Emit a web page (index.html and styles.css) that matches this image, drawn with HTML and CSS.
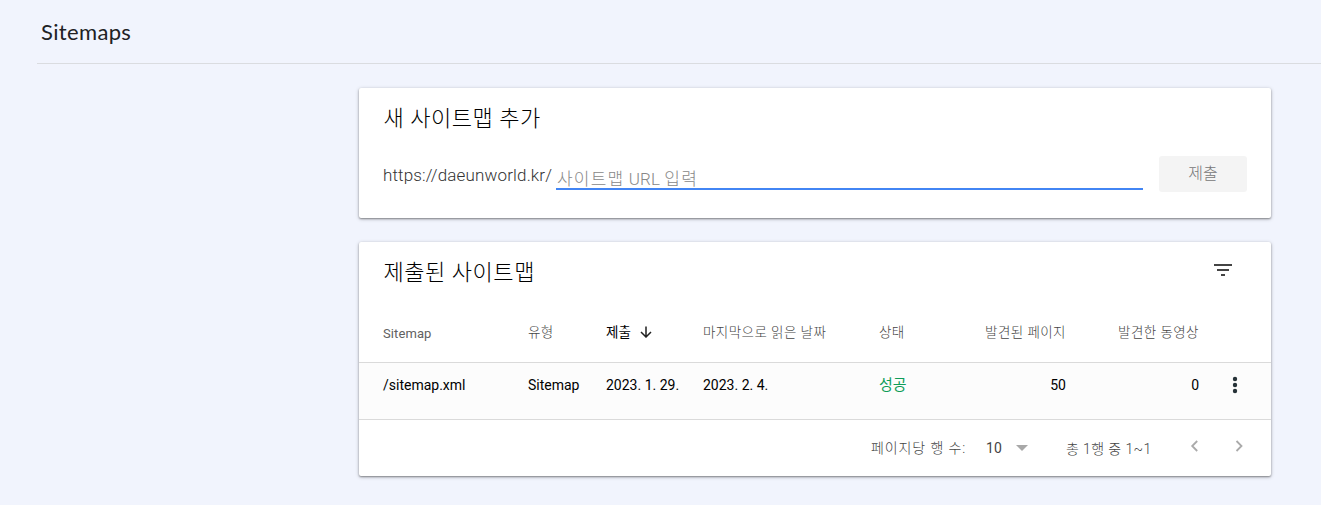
FILE: index.html
```html
<!DOCTYPE html>
<html lang="ko">
<head>
<meta charset="utf-8">
<title>Sitemaps</title>
<link rel="stylesheet" href="styles.css">
</head>
<body>
<header class="page-header"><h1 class="page-title">Sitemaps</h1></header>
<main class="content">
  <section class="card add-card">
    <h2 class="card-title">새 사이트맵 추가</h2>
    <div class="add-form">
      <span class="prefix">https://daeunworld.kr/</span>
      <div class="field"><span class="placeholder"><span class="ko">사이트맵</span> URL <span class="ko">입력</span></span></div>
      <button class="submit" disabled>제출</button>
    </div>
  </section>
  <section class="card">
    <div class="card-head">
      <h2 class="card-title">제출된 사이트맵</h2>
      <svg class="filter" width="24" height="24" viewBox="0 0 24 24"><path fill="#444" d="M3 6h18v2H3zM6 11h12v2H6zM10 16h4v2h-4z"/></svg>
    </div>
    <div class="row head-row">
      <span class="latin-head">Sitemap</span>
      <span>유형</span>
      <span class="sorted">제출<svg class="arrow" width="12" height="12" viewBox="0 0 12 12"><path d="M6 .5V11M1 6l5 5 5-5" fill="none" stroke="#212121" stroke-width="1.5"/></svg></span>
      <span>마지막으로 읽은 날짜</span>
      <span>상태</span>
      <span class="num">발견된 페이지</span>
      <span class="num">발견한 동영상</span>
    </div>
    <div class="row data-row">
      <span>/sitemap.xml</span>
      <span>Sitemap</span>
      <span>2023. 1. 29.</span>
      <span>2023. 2. 4.</span>
      <span class="ok">성공</span>
      <span class="num">50</span>
      <span class="num">0</span>
      <svg class="more" width="6" height="18" viewBox="0 0 6 18"><g fill="#263238"><circle cx="3" cy="3" r="2.2"/><circle cx="3" cy="9" r="2.2"/><circle cx="3" cy="15" r="2.2"/></g></svg>
    </div>
    <footer class="pager">
      <span class="per-page">페이지당 행 수:</span>
      <span class="size">10</span>
      <svg class="caret" width="12" height="6" viewBox="0 0 12 6"><path fill="#a8a8a8" d="M0 0h12L6 6z"/></svg>
      <span class="range">총 1행 중 1~1</span>
      <svg class="chev" width="8" height="12" viewBox="0 0 8 12"><path d="M7.2 1l-5 5 5 5" fill="none" stroke="#aaa" stroke-width="1.8"/></svg>
      <svg class="chev next" width="8" height="12" viewBox="0 0 8 12"><path d="M1.5 1l5 5-5 5" fill="none" stroke="#aaa" stroke-width="1.8"/></svg>
    </footer>
  </section>
</main>
</body>
</html>
```

FILE: styles.css
```css
* { box-sizing: border-box; }
body {
  margin: 0;
  height: 505px;
  overflow: hidden;
  background: #f1f4fd;
  color: #212121;
  font-family: Roboto, "Noto Sans CJK KR", sans-serif;
}
h1, h2 { margin: 0; font-weight: 400; }
svg { display: block; }
.page-header {
  height: 64px;
  margin-left: 37px;
  padding: 18px 0 0 4px;
  border-bottom: 1px solid #dadce0;
}
.page-title {
  font: 400 22px/28px Lato, sans-serif;
  letter-spacing: .35px;
  color: #202124;
}
.content {
  width: 912px;
  margin: 24px 0 0 359px;
  display: flex;
  flex-direction: column;
  gap: 24px;
}
.card {
  background: #fff;
  border-radius: 2px;
  box-shadow: 0 1px 2px rgba(0,0,0,.38), 0 1px 4px rgba(0,0,0,.2);
}
.add-card { height: 130px; padding-top: 15px; }
.card-title {
  padding-left: 24.5px;
  font-size: 22px;
  line-height: 32px;
  font-weight: 300;
  letter-spacing: .55px;
  color: #000;
  white-space: nowrap;
}
.add-form { display: flex; margin: 21px 24px 0; height: 36px; }
.prefix {
  width: 173px;
  font-size: 17px;
  line-height: 39px;
  font-weight: 300;
  letter-spacing: .15px;
  color: #333;
}
.field {
  width: 587px;
  height: 34px;
  border-bottom: 2px solid #4285f4;
  padding: 7px 0 0 1px;
}
.placeholder {
  display: block;
  font-size: 17px;
  line-height: 32px;
  font-weight: 300;
  color: #888;
  letter-spacing: .15px;
  white-space: nowrap;
}
.ko { letter-spacing: 1.2px; }
.submit {
  width: 88px;
  height: 36px;
  margin-left: 16px;
  padding: 0 0 4px;
  border: 0;
  border-radius: 3px;
  background: #f4f4f4;
  color: #777;
  font: 300 16px/32px "Noto Sans CJK KR", sans-serif;
}
.card-head {
  height: 60px;
  padding: 15px 36px 0 0;
  display: flex;
  justify-content: space-between;
}
.filter { margin-top: 1px; }
.row {
  display: grid;
  grid-template-columns: 145px 78px 97px 176px 98px 89px 133px 1fr;
  padding-left: 24px;
  white-space: nowrap;
}
.head-row {
  height: 61px;
  border-bottom: 1px solid #dadada;
  font-size: 13.5px;
  line-height: 61px;
  font-weight: 300;
  letter-spacing: .45px;
  color: #444;
}
.latin-head { font-size: 13px; font-weight: 400; letter-spacing: .1px; line-height: 63px; color: #616161; }
.sorted { display: flex; color: #000; font-weight: 400; letter-spacing: 0; }
.arrow { margin: 24px 0 0 9px; }
.num { text-align: right; }
.data-row {
  height: 57px;
  border-bottom: 1px solid #dadada;
  background: #fcfcfc;
  font-size: 14px;
  line-height: 44px;
  color: #000;
}
.ok { color: #0f9d58; font-size: 15px; }
.more { margin: 13px 0 0 33px; }
.pager {
  display: flex;
  height: 56px;
  padding-left: 512px;
  font-size: 14px;
  line-height: 57px;
  font-weight: 300;
  color: #444;
  white-space: nowrap;
}
.per-page { width: 115px; letter-spacing: .9px; }
.size { width: 30px; font-weight: 400; line-height: 56px; letter-spacing: .1px; }
.caret { margin-top: 25px; }
.range { width: 124px; margin-left: 38px; letter-spacing: .4px; line-height: 58px; }
.chev { margin-top: 20px; }
.next { margin-left: 37px; }
```
